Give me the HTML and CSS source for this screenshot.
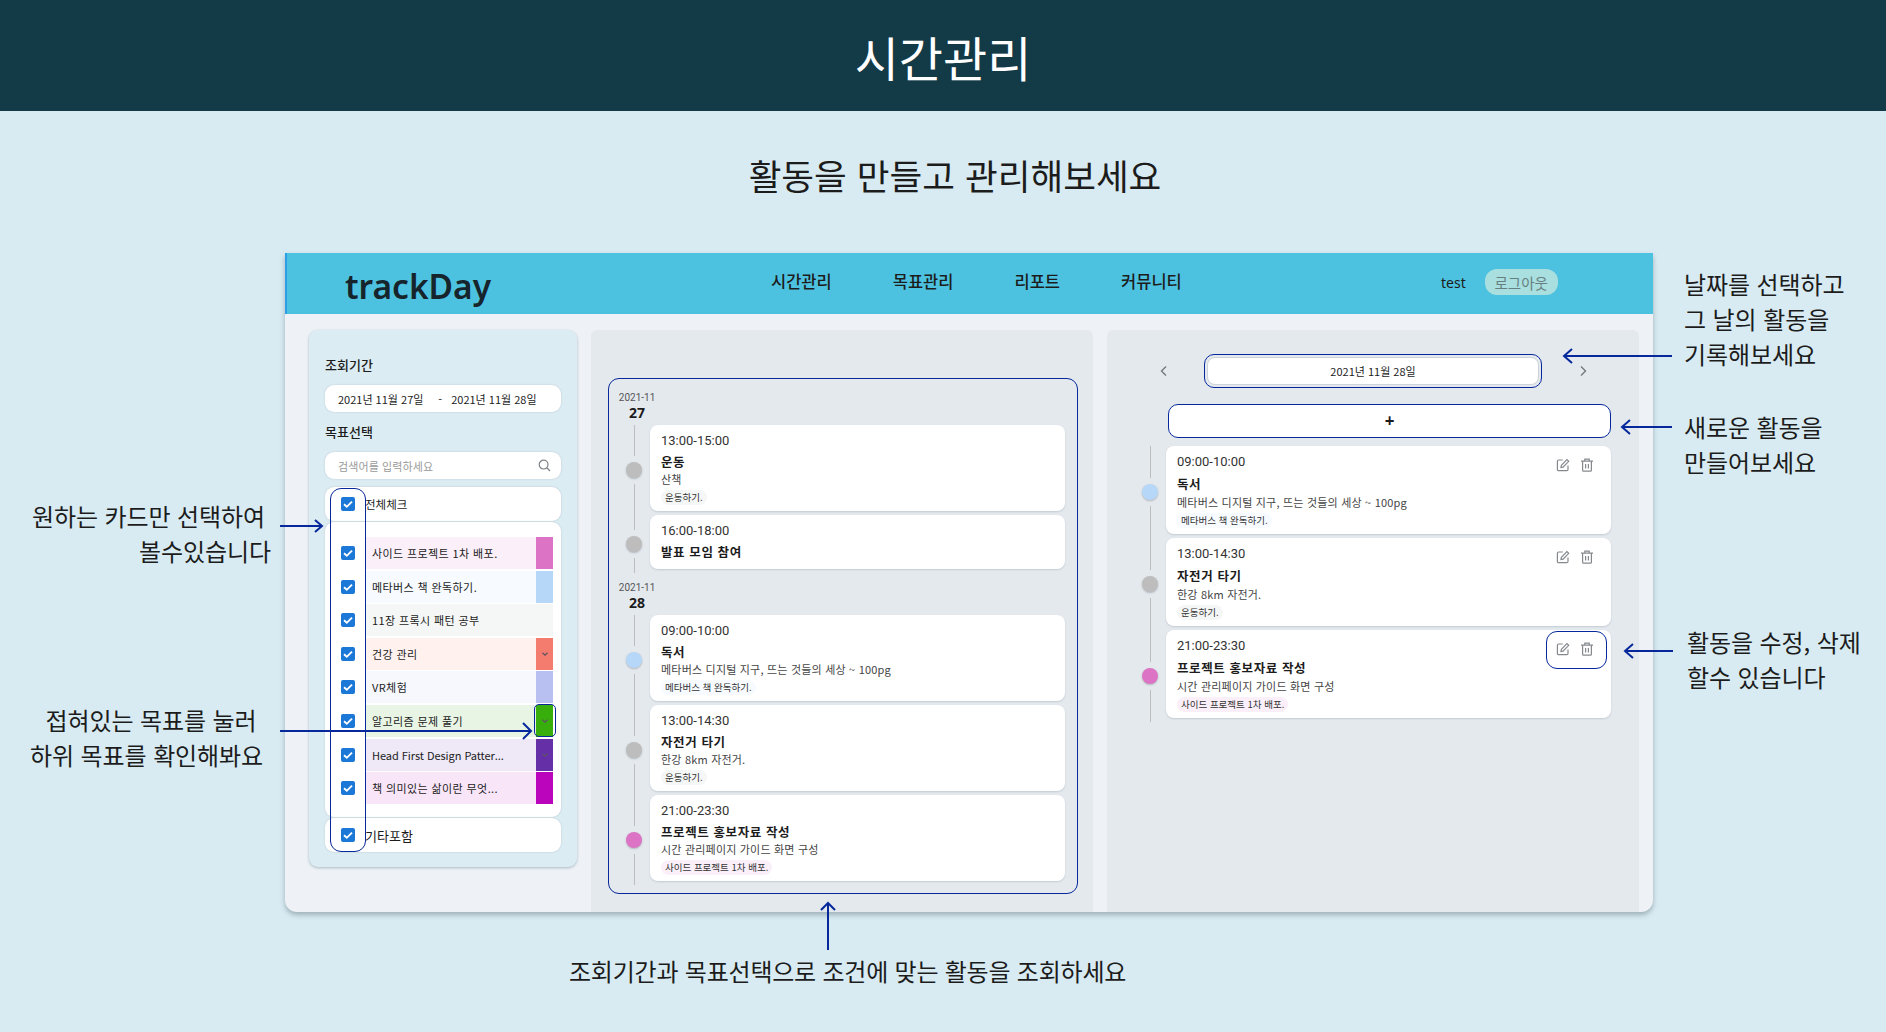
FILE: index.html
```html
<!DOCTYPE html>
<html lang="ko">
	<head>
		<meta charset="utf-8">
		<title>시간관리</title>
		<link rel="stylesheet" href="styles.css">
	</head>
	<body>
		<svg class="sprite" width="0" height="0">
			<symbol id="tick" viewBox="0 0 14 14"><path d="M3 7.2l2.8 2.6L11 4.6" fill="none" stroke="#fff" stroke-width="1.9"/></symbol>
			<symbol id="down" viewBox="0 0 8 8"><path d="M1.5 2.8L4 5.2l2.5-2.4" fill="none" stroke="#5b5560" stroke-width="1.2"/></symbol>
			<symbol id="edit" viewBox="0 0 14 14"><path d="M12 7.5v4a1.2 1.2 0 0 1-1.2 1.2H2.6a1.2 1.2 0 0 1-1.2-1.2V3.2A1.2 1.2 0 0 1 2.6 2h4.2M5.4 7.4L10.9 1.6l1.8 1.7-5.6 5.8-2.1.4z" fill="none" stroke="#85898e" stroke-width="1.2"/></symbol>
			<symbol id="trash" viewBox="0 0 14 14"><path d="M1 3.2h12M2.6 3.2v9a1 1 0 0 0 1 1h6.8a1 1 0 0 0 1-1v-9M4.8 3.2V1.2h4.4v2M5.6 6v4.6M8.4 6v4.6" fill="none" stroke="#85898e" stroke-width="1.2"/></symbol>
		</svg>

		<header class="banner">시간관리</header>
		<h2 class="lead">활동을 만들고 관리해보세요</h2>

		<div class="app">
			<div class="topbar">
				<div class="logo">trackDay</div>
				<nav class="menu">
					<a>시간관리</a>
					<a>목표관리</a>
					<a>리포트</a>
					<a>커뮤니티</a>
				</nav>
				<div class="user">
					<span>test</span>
					<button class="logout">로그아웃</button>
				</div>
			</div>

			<div class="columns">
				<aside class="filter">
					<div class="filter-label">조회기간</div>
					<div class="field range"><span>2021년 11월 27일</span><span class="dash">-</span><span>2021년 11월 28일</span></div>
					<div class="filter-label">목표선택</div>
					<div class="field search">
						<span>검색어를 입력하세요</span>
						<svg width="13" height="13" viewBox="0 0 13 13"><circle cx="5.6" cy="5.6" r="4.4" fill="none" stroke="#7f8488" stroke-width="1.2"/><path d="M8.8 8.8l3.2 3.2" stroke="#7f8488" stroke-width="1.3"/></svg>
					</div>

					<div class="goal-card all">
						<span class="check"><svg><use href="#tick"/></svg></span>
						<span>전체체크</span>
					</div>
					<div class="goal-card goal-list">
						<div class="goal">
							<span class="check"><svg><use href="#tick"/></svg></span>
							<div class="goal-bar pink"><span>사이드 프로젝트 1차 배포.</span><i class="swatch"></i></div>
						</div>
						<div class="goal">
							<span class="check"><svg><use href="#tick"/></svg></span>
							<div class="goal-bar sky"><span>메타버스 책 완독하기.</span><i class="swatch"></i></div>
						</div>
						<div class="goal">
							<span class="check"><svg><use href="#tick"/></svg></span>
							<div class="goal-bar grey"><span>11장 프록시 패턴 공부</span><i class="swatch"></i></div>
						</div>
						<div class="goal">
							<span class="check"><svg><use href="#tick"/></svg></span>
							<div class="goal-bar coral"><span>건강 관리</span><i class="swatch"><svg><use href="#down"/></svg></i></div>
						</div>
						<div class="goal">
							<span class="check"><svg><use href="#tick"/></svg></span>
							<div class="goal-bar periwinkle"><span>VR체험</span><i class="swatch"></i></div>
						</div>
						<div class="goal">
							<span class="check"><svg><use href="#tick"/></svg></span>
							<div class="goal-bar green"><span>알고리즘 문제 풀기</span><i class="swatch"><svg><use href="#down"/></svg></i></div>
						</div>
						<div class="goal">
							<span class="check"><svg><use href="#tick"/></svg></span>
							<div class="goal-bar purple latin"><span>Head First Design Patter...</span><i class="swatch"><svg><use href="#down"/></svg></i></div>
						</div>
						<div class="goal">
							<span class="check"><svg><use href="#tick"/></svg></span>
							<div class="goal-bar magenta"><span>책 의미있는 삶이란 무엇...</span><i class="swatch"></i></div>
						</div>
					</div>
					<div class="goal-card others">
						<span class="check"><svg><use href="#tick"/></svg></span>
						<span>기타포함</span>
					</div>
				</aside>

				<section class="history">
					<div class="history-box">
						<div class="day"><small>2021-11</small><b>27</b></div>
						<div class="entry">
							<div class="rail"><i></i><em class="dot-grey"></em><i></i></div>
							<div class="card">
								<div class="time">13:00-15:00</div>
								<div class="name">운동</div>
								<div class="memo">산책</div>
								<span class="tag tag-grey">운동하기.</span>
							</div>
						</div>
						<div class="entry">
							<div class="rail"><i></i><em class="dot-grey"></em><i></i></div>
							<div class="card short">
								<div class="time">16:00-18:00</div>
								<div class="name">발표 모임 참여</div>
							</div>
						</div>
						<div class="day"><small>2021-11</small><b>28</b></div>
						<div class="entry">
							<div class="rail"><i></i><em class="dot-sky"></em><i></i></div>
							<div class="card">
								<div class="time">09:00-10:00</div>
								<div class="name">독서</div>
								<div class="memo">메타버스 디지털 지구, 뜨는 것들의 세상 ~ 100pg</div>
								<span class="tag tag-sky">메타버스 책 완독하기.</span>
							</div>
						</div>
						<div class="entry">
							<div class="rail"><i></i><em class="dot-grey"></em><i></i></div>
							<div class="card">
								<div class="time">13:00-14:30</div>
								<div class="name">자전거 타기</div>
								<div class="memo">한강 8km 자전거.</div>
								<span class="tag tag-grey">운동하기.</span>
							</div>
						</div>
						<div class="entry">
							<div class="rail"><i></i><em class="dot-pink"></em><i></i></div>
							<div class="card">
								<div class="time">21:00-23:30</div>
								<div class="name">프로젝트 홍보자료 작성</div>
								<div class="memo">시간 관리페이지 가이드 화면 구성</div>
								<span class="tag tag-pink">사이드 프로젝트 1차 배포.</span>
							</div>
						</div>
					</div>
				</section>

				<section class="today">
					<div class="date-row">
						<svg class="arrow-btn" width="9" height="12" viewBox="0 0 9 12"><path d="M7 1.5L2.5 6 7 10.5" fill="none" stroke="#74797e" stroke-width="1.4"/></svg>
						<div class="date-ring"><div class="date-value">2021년 11월 28일</div></div>
						<svg class="arrow-btn" width="9" height="12" viewBox="0 0 9 12"><path d="M2 1.5L6.5 6 2 10.5" fill="none" stroke="#74797e" stroke-width="1.4"/></svg>
					</div>
					<button class="add">+</button>
					<div class="entry wide">
						<div class="rail"><i></i><em class="dot-sky"></em><i></i></div>
						<div class="card">
							<div class="tools"><svg><use href="#edit"/></svg><svg><use href="#trash"/></svg></div>
							<div class="time">09:00-10:00</div>
							<div class="name">독서</div>
							<div class="memo">메타버스 디지털 지구, 뜨는 것들의 세상 ~ 100pg</div>
							<span class="tag tag-sky">메타버스 책 완독하기.</span>
						</div>
					</div>
					<div class="entry wide">
						<div class="rail"><i></i><em class="dot-grey"></em><i></i></div>
						<div class="card">
							<div class="tools"><svg><use href="#edit"/></svg><svg><use href="#trash"/></svg></div>
							<div class="time">13:00-14:30</div>
							<div class="name">자전거 타기</div>
							<div class="memo">한강 8km 자전거.</div>
							<span class="tag tag-grey">운동하기.</span>
						</div>
					</div>
					<div class="entry wide">
						<div class="rail"><i></i><em class="dot-pink"></em><i></i></div>
						<div class="card">
							<div class="tools"><svg><use href="#edit"/></svg><svg><use href="#trash"/></svg></div>
							<div class="time">21:00-23:30</div>
							<div class="name">프로젝트 홍보자료 작성</div>
							<div class="memo">시간 관리페이지 가이드 화면 구성</div>
							<span class="tag tag-pink">사이드 프로젝트 1차 배포.</span>
						</div>
					</div>
				</section>
			</div>
		</div>

		<!-- callouts laid over the screenshot -->
		<div class="ring ring-checks"></div>
		<div class="ring ring-swatch"></div>
		<div class="ring ring-tools"></div>

		<svg class="arrows" width="1886" height="1032" viewBox="0 0 1886 1032">
			<g fill="none" stroke="#06289b" stroke-width="2">
				<path d="M280 526H322M315 520l7 6-7 6"/>
				<path d="M280 731H531M523 723l8 8-8 8"/>
				<path d="M1672 356H1564M1572 349l-8 7 8 7"/>
				<path d="M1672 427H1622M1630 420l-8 7 8 7"/>
				<path d="M1673 651H1625M1633 644l-8 7 8 7"/>
				<path d="M828 950V903M821 910l7-7 7 7"/>
			</g>
		</svg>

		<p class="note note-checks">원하는 카드만 선택하여<br><span class="nudge">볼수있습니다</span></p>
		<p class="note note-fold"><span class="nudge-fold">접혀있는 목표를 눌러</span><br>하위 목표를 확인해봐요</p>
		<p class="note note-date">날짜를 선택하고<br>그 날의 활동을<br>기록해보세요</p>
		<p class="note note-new">새로운 활동을<br>만들어보세요</p>
		<p class="note note-edit">활동을 수정, 삭제<br>할수 있습니다</p>
		<p class="note note-search">조회기간과 목표선택으로 조건에 맞는 활동을 조회하세요</p>
	</body>
</html>
```

FILE: styles.css
```css
body {
	margin: 0;
	position: relative;
	height: 1032px;
	overflow: hidden;
	background-color: #d8ebf2;
	font-family: "Noto Sans CJK KR", "Noto Sans", sans-serif;
	color: #1c1c1c;
}

.sprite {
	position: absolute;
}

.banner {
	height: 111px;
	line-height: 113px;
	background-color: #133a47;
	color: #fff;
	text-align: center;
	font-size: 48px;
}

.lead {
	margin: 0;
	height: 142px;
	padding: 39px 0 0 24px;
	box-sizing: border-box;
	text-align: center;
	font-size: 35.6px;
	line-height: 50px;
	font-weight: 400;
}

/* app frame */
.app {
	width: 1368px;
	height: 659px;
	margin-left: 285px;
	background-color: #eef2f7;
	border-radius: 0 0 12px 12px;
	box-shadow: 0 3px 5px #7c8a9299;
}

.topbar {
	display: flex;
	align-items: center;
	height: 61px;
	background-color: #4dc2e0;
	border-left: 2px solid #2f9ee6;
	box-sizing: border-box;
}

.logo {
	width: 484px;
	padding-left: 58px;
	box-sizing: border-box;
	font-family: "Noto Sans", sans-serif;
	font-size: 33.5px;
	font-weight: 600;
	color: #16242b;
	margin-top: 4px;
}

.menu {
	display: flex;
	gap: 61px;
	width: 670px;
	font-size: 16.5px;
	font-weight: 500;
	white-space: nowrap;
	margin-top: -5px;
}

.user {
	display: flex;
	align-items: center;
	gap: 19px;
	font-family: "Noto Sans", sans-serif;
	font-size: 14px;
	margin-top: -3px;
}

.logout {
	width: 73px;
	height: 26px;
	padding: 0;
	border: none;
	border-radius: 12px;
	background-color: #aadfe0;
	color: #667f80;
	font-family: "Noto Sans CJK KR", sans-serif;
	font-size: 14.5px;
}

.columns {
	display: flex;
	align-items: flex-start;
	gap: 14px;
	height: 598px;
	padding: 16px 0 0 24px;
	box-sizing: border-box;
}

/* left filter */
.filter {
	width: 268px;
	height: 537px;
	box-sizing: border-box;
	padding: 26px 16px 0;
	background-color: #dcecf3;
	border-radius: 9px;
	box-shadow: 0 1px 3px #a9b9c2;
}

.filter-label {
	height: 18px;
	line-height: 18px;
	margin-bottom: 11px;
	font-size: 13px;
	font-weight: 500;
}

.field {
	display: flex;
	align-items: center;
	height: 27px;
	margin-bottom: 11px;
	padding: 0 13px;
	box-sizing: border-box;
	background-color: #fff;
	border-radius: 9px;
	box-shadow: 0 0 2px #b9c6cf;
	font-size: 11px;
}

.range .dash {
	margin: 0 9px 0 15px;
}

.search {
	justify-content: space-between;
	margin-bottom: 8px;
	padding-right: 10px;
	color: #9a9a9a;
	letter-spacing: .1px;
}

.goal-card {
	background-color: #fff;
	border-radius: 9px;
	box-shadow: 0 0 2px #b9c6cf;
}

.all, .others {
	display: flex;
	align-items: center;
	height: 34px;
	padding-left: 16px;
	font-size: 11.5px;
	gap: 10px;
}

.others {
	height: 34px;
	margin-top: 1px;
	font-size: 13px;
}

.goal-list {
	display: flex;
	flex-direction: column;
	gap: 1.6px;
	height: 295px;
	margin-top: 1px;
	padding: 15px 0 0 16px;
	box-sizing: border-box;
}

.goal {
	display: flex;
	align-items: center;
	height: 32px;
}

.check {
	flex: none;
	width: 14px;
	height: 14px;
	border-radius: 2px;
	background-color: #1b78d6;
}

.check svg {
	display: block;
	width: 14px;
	height: 14px;
}

.goal-bar {
	display: flex;
	align-items: center;
	justify-content: space-between;
	width: 187px;
	height: 32px;
	margin-left: 11px;
	padding-left: 6px;
	box-sizing: border-box;
	font-size: 11px;
	letter-spacing: .4px;
	white-space: nowrap;
}

.goal-bar.latin {
	letter-spacing: -.05px;
}

.swatch {
	display: flex;
	align-items: center;
	justify-content: center;
	width: 17px;
	height: 32px;
}

.swatch svg {
	width: 8px;
	height: 8px;
}

.pink { background-color: #fbf0f9; }
.pink .swatch { background-color: #dc73c4; }
.sky { background-color: #f7fbff; }
.sky .swatch { background-color: #b6d7f8; }
.grey { background-color: #f5f6f6; }
.grey .swatch { background-color: #f5f6f6; }
.coral { background-color: #fef1ee; }
.coral .swatch { background-color: #f47c6f; }
.periwinkle { background-color: #f7f8fe; }
.periwinkle .swatch { background-color: #b8c0f2; }
.green { background-color: #e9f5e4; }
.green .swatch { background-color: #38ae0d; }
.purple { background-color: #eee8f7; }
.purple .swatch { background-color: #652fa8; }
.magenta { background-color: #f8e6f8; }
.magenta .swatch { background-color: #bb05bc; }

/* history + today columns */
.history, .today {
	height: 582px;
	box-sizing: border-box;
	background-color: #e4e9ee;
	border-radius: 6px 6px 0 0;
}

.history {
	width: 502px;
	padding: 48px 0 0 17px;
}

.history-box {
	width: 470px;
	height: 516px;
	box-sizing: border-box;
	padding: 4px 12px 0 17px;
	border: 1.5px solid #06289b;
	border-radius: 11px;
}

.day {
	display: flex;
	flex-direction: column;
	align-items: center;
	width: 34px;
	height: 42px;
	margin-left: -6px;
	padding-top: 8px;
	box-sizing: border-box;
	white-space: nowrap;
}

.day small {
	font-family: "Roboto", sans-serif;
	font-size: 10px;
	line-height: 13px;
	color: #555;
}

.day b {
	font-family: "Noto Sans", sans-serif;
	font-size: 14px;
	line-height: 18px;
}

.entry {
	display: flex;
}

.rail {
	display: flex;
	flex-direction: column;
	align-items: center;
	flex: none;
	width: 16px;
	margin-right: 8px;
}

.rail i {
	flex: 1;
	width: 1px;
	background-color: #bdbdbd;
}

.rail em {
	width: 16px;
	height: 16px;
	margin: 6px 0;
	border-radius: 50%;
	box-shadow: 0 1px 2px #b0b6bb;
}

.dot-grey { background-color: #bdbdbd; }
.dot-sky { background-color: #b6d7f8; }
.dot-pink { background-color: #dc73c4; }

.card {
	position: relative;
	flex: 1;
	height: 86px;
	margin-bottom: 4px;
	padding: 8px 11px 0;
	box-sizing: border-box;
	background-color: #fff;
	border-radius: 8px;
	box-shadow: 0 1px 2px #c3ccd3;
}

.card.short {
	height: 54px;
}

.time {
	font-family: "Roboto", sans-serif;
	font-size: 13px;
	line-height: 16px;
	color: #333;
}

.name {
	margin-top: 5px;
	font-size: 12.5px;
	line-height: 16px;
	font-weight: 700;
	letter-spacing: .6px;
}

.memo {
	margin-top: 1px;
	font-size: 11px;
	line-height: 16px;
	color: #444;
	letter-spacing: .2px;
}

.tag {
	display: block;
	width: fit-content;
	margin-top: 3px;
	padding: 0 4px;
	height: 15px;
	line-height: 15px;
	border-radius: 8px;
	font-size: 9.5px;
	color: #333;
}

.tag-grey { background-color: #f5f6f6; }
.tag-sky { background-color: #f7fbff; }
.tag-pink { background-color: #fbf0f9; }

.today {
	width: 532px;
	padding: 24px 28px 0 35px;
}

.date-row {
	display: grid;
	grid-template-columns: 42px 338px 42px;
	gap: 20px;
	align-items: center;
	height: 34px;
	margin-bottom: 16px;
}

.arrow-btn {
	justify-self: center;
}

.date-ring {
	height: 34px;
	padding: 2px;
	box-sizing: border-box;
	border: 1.5px solid #06289b;
	border-radius: 10px;
}

.date-value {
	height: 100%;
	line-height: 26px;
	box-sizing: border-box;
	background-color: #fff;
	border: 1px solid #cdd3d8;
	border-radius: 8px;
	text-align: center;
	font-size: 11px;
}

.add {
	display: block;
	width: 443px;
	height: 34px;
	margin: 0 0 8px 26px;
	padding: 0 0 2px;
	background-color: #fff;
	border: 1.5px solid #06289b;
	border-radius: 10px;
	font-family: "Noto Sans", sans-serif;
	font-size: 17px;
	font-weight: 700;
	color: #1c1c1c;
}

.wide .card {
	height: 88px;
}

.wide .name {
	margin-top: 6px;
}

.wide .memo {
	margin-top: 2px;
}

.tools {
	position: absolute;
	top: 12px;
	right: 17px;
	display: flex;
	gap: 10px;
}

.tools svg {
	display: block;
	width: 14px;
	height: 14px;
}

/* callouts */
.ring {
	position: absolute;
	box-sizing: border-box;
	border: 1.5px solid #06289b;
}

.ring-checks {
	left: 330px;
	top: 488px;
	width: 36px;
	height: 364px;
	border-radius: 11px;
}

.ring-swatch {
	left: 534px;
	top: 704px;
	width: 22px;
	height: 33px;
	border-radius: 5px;
}

.ring-tools {
	left: 1546px;
	top: 631px;
	width: 61px;
	height: 38px;
	border-radius: 11px;
}

.arrows {
	position: absolute;
	left: 0;
	top: 0;
}

.note {
	position: absolute;
	margin: 0;
	font-size: 24px;
	line-height: 35px;
	letter-spacing: -.1px;
	white-space: nowrap;
	color: #1c1c1c;
}

.note-checks {
	top: 498px;
	right: 1621px;
	text-align: right;
}

.nudge {
	margin-right: -6px;
}

.note-fold {
	top: 702px;
	left: 30px;
	width: 232px;
	text-align: center;
}

.nudge-fold {
	margin-left: 10px;
}

.note-date {
	top: 266px;
	left: 1684px;
}

.note-new {
	top: 409px;
	left: 1684px;
}

.note-edit {
	top: 624px;
	left: 1687px;
}

.note-search {
	top: 953px;
	left: 569px;
	letter-spacing: -.22px;
}
```
